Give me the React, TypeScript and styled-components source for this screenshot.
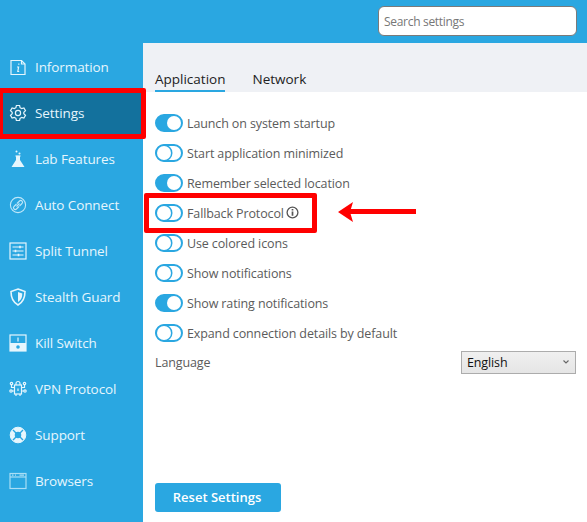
import React from 'react';
import styled, { createGlobalStyle } from 'styled-components';

const GlobalStyle = createGlobalStyle`
	html, body { margin: 0; padding: 0; background: #fff; }
	body { font-family: 'Open Sans', 'Noto Sans', sans-serif; }
`;

const Page = styled.div`
	position: relative;
	width: 587px;
	height: 522px;
	overflow: hidden;
	display: flex;
	flex-direction: column;
	background: #2aa7e1;
`;

const TopBar = styled.div`
	height: 43px;
	flex: none;
	display: flex;
	justify-content: flex-end;
	align-items: flex-start;
	padding: 6px 10px 0 0;
	box-sizing: border-box;
`;

const Search = styled.input`
	width: 199px;
	height: 30px;
	box-sizing: border-box;
	border: 1px solid #7a7a7a;
	border-radius: 6px;
	background: #fff;
	padding: 0 5px;
	font: 12px 'Open Sans', sans-serif;
	letter-spacing: -0.3px;
	outline: none;
	&::placeholder { color: #777; opacity: 1; }
`;

const Body = styled.div`
	flex: 1;
	display: flex;
	min-height: 0;
`;

const Sidebar = styled.nav`
	width: 143px;
	flex: none;
	display: flex;
	flex-direction: column;
	margin-top: 1px;
`;

const NavItem = styled.div<{ $active?: boolean }>`
	height: 46px;
	display: flex;
	align-items: center;
	gap: 8px;
	padding-left: 9px;
	color: #e6f6fd;
	font-size: 13.5px;
	letter-spacing: -0.1px;
	background: ${p => (p.$active ? '#13719d' : 'transparent')};
	svg { width: 18px; height: 18px; flex: none; }
`;

const Main = styled.main`
	flex: 1;
	background: #fff;
	display: flex;
	flex-direction: column;
	min-width: 0;
`;

const Tabs = styled.div`
	height: 49px;
	flex: none;
	box-sizing: border-box;
	background: #eff1f5;
	display: flex;
	align-items: flex-end;
	gap: 27px;
	padding-left: 12px;
`;

const Tab = styled.div<{ $active?: boolean }>`
	font-size: 13.5px;
	color: #222;
	height: 26px;
	padding-top: 3px;
	line-height: 21px;
	box-sizing: border-box;
	border-bottom: 2px solid ${p => (p.$active ? '#2aa7e1' : 'transparent')};
`;

const Content = styled.div`
	flex: 1;
	display: flex;
	flex-direction: column;
	padding: 16px 11px 10px 12px;
`;

const Row = styled.div`
	height: 30px;
	display: flex;
	align-items: center;
	gap: 4px;
	color: #5b5b5b;
	font-size: 12.5px;
	letter-spacing: -0.12px;
`;

const Toggle = styled.span<{ $on?: boolean }>`
	position: relative;
	display: block;
	box-sizing: content-box;
	width: 24px;
	height: 14px;
	border-radius: 9px;
	border: 2px solid #2aa7e1;
	background: ${p => (p.$on ? '#2aa7e1' : '#fff')};
	&::after {
		content: '';
		position: absolute;
		top: 0;
		left: ${p => (p.$on ? '10px' : '0')};
		width: 14px;
		height: 14px;
		border-radius: 50%;
		background: #fff;
		box-shadow: ${p => (p.$on ? 'none' : '0 0 0 1.5px #2aa7e1')};
	}
`;

const InfoIcon = styled.svg`
	width: 13px;
	height: 13px;
	margin-left: -2px;
	margin-top: -2px;
`;

const LanguageRow = styled(Row)`
	justify-content: space-between;
	height: 28px;
`;

const Select = styled.div`
	width: 115px;
	height: 23px;
	box-sizing: border-box;
	border: 1px solid #acacac;
	background: linear-gradient(#f0f0f0, #e5e5e5);
	display: flex;
	align-items: center;
	justify-content: space-between;
	padding: 0 6px 0 5px;
	color: #111;
	font-size: 12.5px;
`;

const ResetButton = styled.button`
	margin-top: auto;
	width: 126px;
	height: 29px;
	border: 0;
	border-radius: 3px;
	background: #2aa7e1;
	color: #fff;
	font: 600 13px 'Open Sans', sans-serif;
	padding: 0 2px 2px 0;
`;

const Highlight = styled.div<{ $x: number; $y: number; $w: number; $h: number }>`
	position: absolute;
	left: ${p => p.$x}px;
	top: ${p => p.$y}px;
	width: ${p => p.$w}px;
	height: ${p => p.$h}px;
	box-sizing: border-box;
	border: 5px solid #ff0000;
	border-radius: 2px;
	pointer-events: none;
`;

const Arrow = styled.svg`
	position: absolute;
	left: 338px;
	top: 200px;
	width: 80px;
	height: 24px;
`;

const stroke = { fill: 'none', stroke: '#e6f6fd', strokeWidth: 1.2 };

const icons: Record<string, React.ReactNode> = {
	information: (
		<svg viewBox="0 0 18 18" {...stroke}>
			<path d="M2 2.5h10.500l3.500 3.500v10.500H2z" />
			<path d="M12.500 2.500V6H16" />
			<path d="M9.800 5.500v1.200M8 9h1.600l-.8 4.500h1.400" />
		</svg>
	),
	settings: (
		<svg viewBox="0 0 18 18" {...stroke}>
			<path d="M7.400 1.500h3.200l.5 2.200 1.600.9 2.200-.7 1.600 2.800-1.700 1.500v1.600l1.700 1.500-1.600 2.800-2.200-.7-1.600.9-.5 2.200H7.400l-.5-2.200-1.600-.9-2.200.7-1.600-2.800 1.700-1.500V8.200L1.500 6.700l1.600-2.800 2.200.7 1.600-.9z" />
			<circle cx="9" cy="9" r="2.600" />
		</svg>
	),
	lab: (
		<svg viewBox="0 0 18 18">
			<path d="M7 6h4v4l4.500 7h-13L7 10z" fill="#e6f6fd" />
			<path d="M6.500 6h5" stroke="#e6f6fd" strokeWidth="1.200" />
			<circle cx="7.500" cy="1.500" r="1" fill="#e6f6fd" />
			<circle cx="10.500" cy="3.500" r="1" fill="#e6f6fd" />
		</svg>
	),
	connect: (
		<svg viewBox="0 0 18 18" fill="none" stroke="#bfe7f9" strokeWidth="1.100">
			<circle cx="9" cy="9" r="7.600" />
			<path d="M8 7.500l2.500-2.500a1.700 1.700 0 0 1 2.500 2.500l-2.500 2.500M10 10.500L7.500 13A1.700 1.700 0 0 1 5 10.500L7.500 8M7.500 10.500l3-3" />
		</svg>
	),
	split: (
		<svg viewBox="0 0 18 18" {...stroke}>
			<rect x="1" y="1" width="16" height="16" />
			<path d="M3.500 5h11M3.500 9h11M3.500 13h11" />
			<path d="M11 3.800v2.400M6.500 7.800v2.400M9.500 11.800v2.400" strokeWidth="1.600" />
		</svg>
	),
	shield: (
		<svg viewBox="0 0 18 18">
			<path d="M9 1l7 2.500c0 6.500-1.500 10.500-7 13.500C3.500 14 2 10 2 3.500z" fill="none" stroke="#e6f6fd" strokeWidth="1.600" />
			<path d="M9 4l4.300 1.600C13.200 9.800 12.200 12 9 14z" fill="#e6f6fd" />
		</svg>
	),
	kill: (
		<svg viewBox="0 0 18 18">
			<rect x="1" y="1" width="16" height="16" fill="none" stroke="#e6f6fd" strokeWidth="1.200" />
			<rect x="1" y="9" width="16" height="8" fill="#e6f6fd" />
			<path d="M9 3.500v4" stroke="#e6f6fd" strokeWidth="1.200" />
			<circle cx="9" cy="13" r="1.800" fill="#2aa7e1" />
		</svg>
	),
	protocol: (
		<svg viewBox="0 0 18 18" {...stroke}>
			<rect x="5.500" y="5" width="7" height="9" />
			<path d="M7 5V3.500a2 2 0 0 1 4 0V5" />
			<path d="M9 8.500v2.500M5.500 7.500H2.500V5M5.500 11H3M12.500 7.500h3V5M12.500 11H15M7 14v2M11 14v2" />
			<circle cx="2.500" cy="3.500" r="1.200" />
			<circle cx="15.500" cy="3.500" r="1.200" />
			<circle cx="2" cy="11" r="1.200" />
			<circle cx="16" cy="11" r="1.200" />
		</svg>
	),
	support: (
		<svg viewBox="0 0 18 18">
			<circle cx="9" cy="9" r="5.500" fill="none" stroke="#e6f6fd" strokeWidth="4.500" />
			<circle cx="9" cy="9" r="7.800" fill="none" stroke="#e6f6fd" strokeWidth="1" />
			<path d="M4 4l3 3M14 4l-3 3M4 14l3-3M14 14l-3-3" stroke="#2aa7e1" strokeWidth="1.400" />
		</svg>
	),
	browsers: (
		<svg viewBox="0 0 18 18" fill="none" stroke="#a9def5" strokeWidth="1.200">
			<rect x="1" y="1.500" width="16" height="15" />
			<path d="M1 5h16" />
			<path d="M3 3.200h1.500M6 3.200h1M10.500 3.200h4.500" />
		</svg>
	),
};

const navItems = [
	{ label: 'Information', icon: 'information' },
	{ label: 'Settings', icon: 'settings', active: true },
	{ label: 'Lab Features', icon: 'lab' },
	{ label: 'Auto Connect', icon: 'connect' },
	{ label: 'Split Tunnel', icon: 'split' },
	{ label: 'Stealth Guard', icon: 'shield' },
	{ label: 'Kill Switch', icon: 'kill' },
	{ label: 'VPN Protocol', icon: 'protocol' },
	{ label: 'Support', icon: 'support' },
	{ label: 'Browsers', icon: 'browsers' },
];

const settings = [
	{ label: 'Launch on system startup', on: true },
	{ label: 'Start application minimized', on: false },
	{ label: 'Remember selected location', on: true },
	{ label: 'Fallback Protocol', on: false, info: true },
	{ label: 'Use colored icons', on: false },
	{ label: 'Show notifications', on: false },
	{ label: 'Show rating notifications', on: true },
	{ label: 'Expand connection details by default', on: false },
];

const App = () => (
	<>
		<GlobalStyle />
		<Page>
			<TopBar>
				<Search placeholder="Search settings" readOnly />
			</TopBar>
			<Body>
				<Sidebar>
					{navItems.map(item => (
						<NavItem key={item.label} $active={item.active}>
							{icons[item.icon]}
							{item.label}
						</NavItem>
					))}
				</Sidebar>
				<Main>
					<Tabs>
						<Tab $active>Application</Tab>
						<Tab>Network</Tab>
					</Tabs>
					<Content>
						{settings.map(s => (
							<Row key={s.label}>
								<Toggle $on={s.on} />
								{s.label}
								{s.info && (
									<InfoIcon viewBox="0 0 13 13">
										<circle cx="6.500" cy="6.500" r="5.400" fill="none" stroke="#555" strokeWidth="1.300" />
										<path d="M6.500 3v1.500M6.500 5.500v4.200" stroke="#555" strokeWidth="1.700" />
									</InfoIcon>
								)}
							</Row>
						))}
						<LanguageRow>
							Language
							<Select>
								English
								<svg width="6" height="4" viewBox="0 0 6 4">
									<path d="M.5.500L3 3 5.500.500" fill="none" stroke="#666" strokeWidth="1.100" />
								</svg>
							</Select>
						</LanguageRow>
						<ResetButton>Reset Settings</ResetButton>
					</Content>
				</Main>
			</Body>
			<Highlight $x={-2} $y={88} $w={148} $h={51} />
			<Highlight $x={144} $y={193} $w={173} $h={40} />
			<Arrow viewBox="0 0 80 24">
				<path d="M78 9H12v5h66z" fill="#ff0000" />
				<path d="M0 12L15 2l-3 10 3 10z" fill="#ff0000" />
			</Arrow>
		</Page>
	</>
);

export default App;
